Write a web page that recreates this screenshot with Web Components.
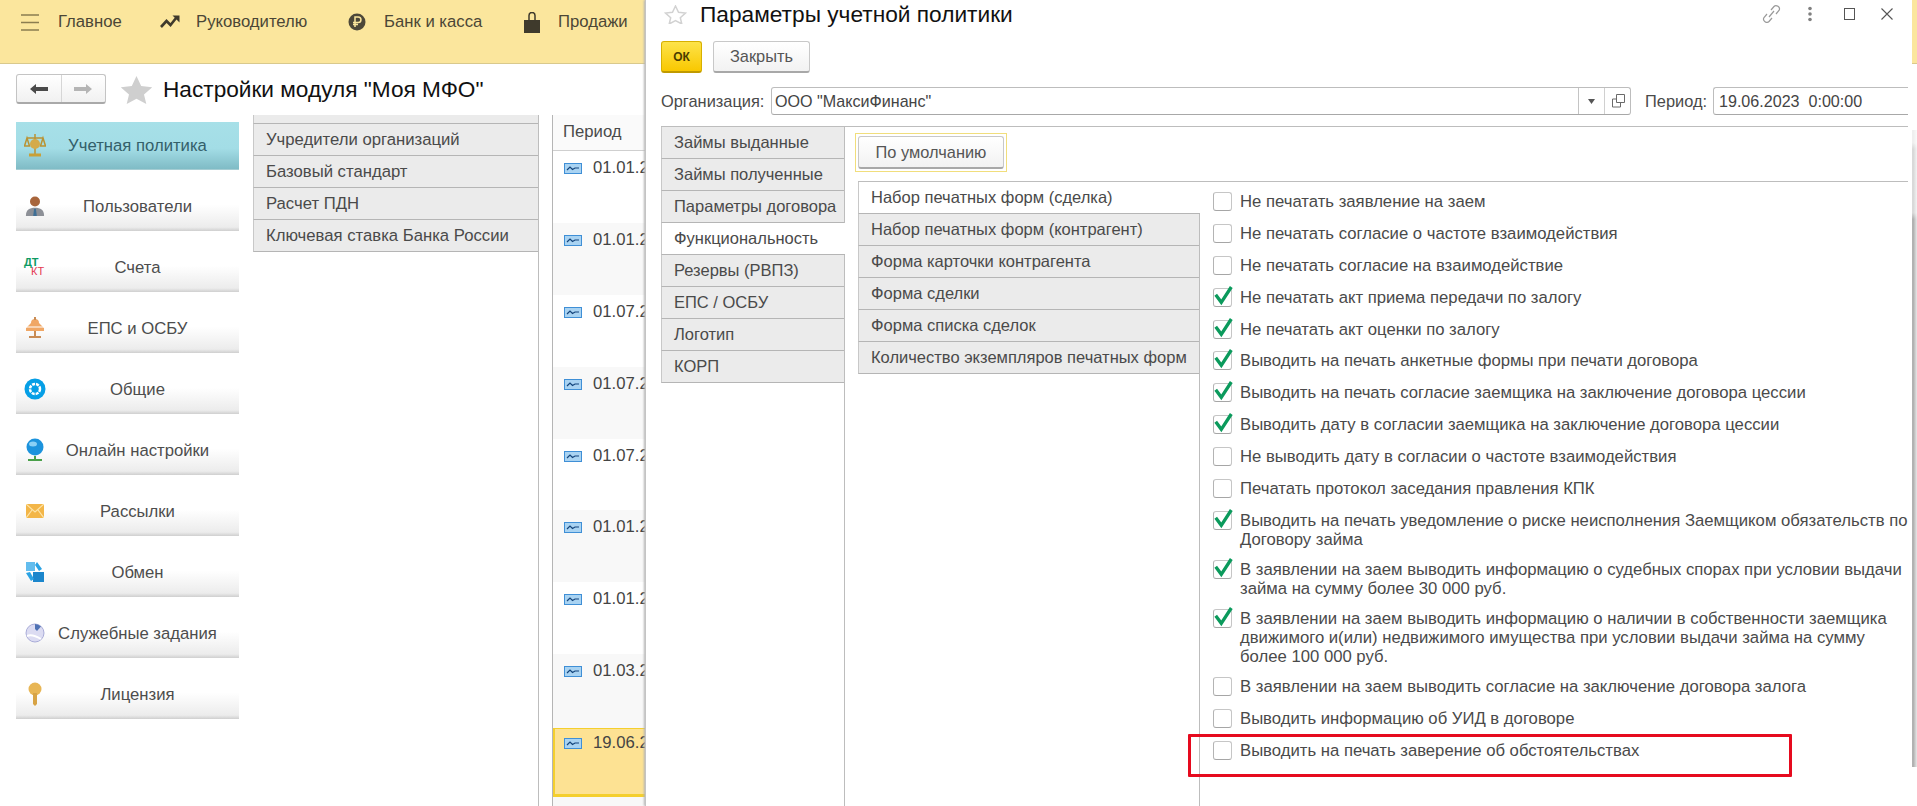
<!DOCTYPE html>
<html lang="ru"><head><meta charset="utf-8"><style>
html,body{margin:0;padding:0;width:1917px;height:806px;overflow:hidden;background:#fff;font-family:"Liberation Sans",Arial,sans-serif;color:#4a4a4a}
app-shell{display:block}
</style></head><body>
<template id="t-shell"><style>
:host{display:block;width:1917px;height:806px;overflow:hidden;position:relative;background:#fff}
.main{display:flex;flex-direction:column;width:646px;height:806px;overflow:hidden}
.work{display:flex;flex:1;min-height:0}
.dlg{position:absolute;left:646px;top:0;width:1266px;height:806px;background:#fff;box-shadow:-1px 0 0 #c4c4c4,-2px 0 2px #b5b5b5;z-index:5}
.rest{position:absolute;left:1912px;top:0;width:5px;height:63px;background:#fbe69d;border-bottom:1px solid #d9c98c}
.side{position:absolute;left:1912px;top:130px;width:5px;height:637px;background:linear-gradient(#efefef 0,#efefef 2%,#d9d9d9 3%,#d9d9d9 13%,#b2b2b2 14%,#b2b2b2 100%)}
.side2{position:absolute;left:1914px;top:130px;width:3px;height:637px;background:linear-gradient(90deg,rgba(255,255,255,.1),rgba(255,255,255,.7))}
</style><div class="main"><slot name="top"></slot><slot name="head"></slot><div class="work"><slot name="work"></slot></div></div><div class="rest"></div><div class="side"></div><div class="side2"></div><div class="dlg"><slot name="dlg"></slot></div></template>

<template id="t-topbar"><style>
:host{display:block;height:63px;background:#fbe69d;border-bottom:1px solid #d9c98c;position:relative;font-size:16.7px;color:#4b4636}
.i{position:absolute;top:12px;height:20px;display:flex;align-items:center;white-space:nowrap}
svg{display:block}
</style>
<div class="i" style="left:21px"><svg width="18" height="18" viewBox="0 0 18 18"><path d="M0 2h18M0 9.500h18M0 17h18" stroke="#8b7d50" stroke-width="1.700"/></svg><span style="margin-left:19px">Главное</span></div>
<div class="i" style="left:160px"><svg width="20" height="20" viewBox="0 0 20 20"><path d="M1 15l5.500-6 4 4 6-7.500" fill="none" stroke="#3f3a2c" stroke-width="2.600"/><path d="M12.500 3.500h7v7z" fill="#3f3a2c"/></svg><span style="margin-left:16px">Руководителю</span></div>
<div class="i" style="left:348px"><svg width="18" height="20" viewBox="0 0 18 20"><circle cx="9" cy="10" r="8.500" fill="#4d4839"/><path d="M7 15V5h3.200a2.700 2.700 0 010 5.500H5M5 12.600h5" fill="none" stroke="#fbe69d" stroke-width="1.500"/></svg><span style="margin-left:18px">Банк и касса</span></div>
<div class="i" style="left:524px"><svg width="16" height="21" viewBox="0 0 16 21"><path d="M0 8h16v13H0z" fill="#3f3a2c"/><path d="M5 10V3.500a3 3 0 016 0V10" fill="none" stroke="#3f3a2c" stroke-width="1.500"/></svg><span style="margin-left:18px">Продажи</span></div>
</template>

<template id="t-head"><style>
:host{display:flex;align-items:flex-start;height:41px;padding:10px 0 0 16px;box-sizing:content-box;flex:none}
.nav{display:flex;width:90px;height:30px;box-sizing:border-box;border:1px solid #c4c4c4;border-bottom:2px solid #a9a9a9;border-radius:3px;background:linear-gradient(#fff,#f1f1f1)}
.nav div{flex:1;display:flex;align-items:center;justify-content:center}
.nav div+div{border-left:1px solid #d6d6d6}
.star{margin:2px 0 0 15px}
h1{font:400 22.650px/30px "Liberation Sans",Arial,sans-serif;color:#111;margin:0 0 0 11px;white-space:nowrap}
</style><div class="nav"><div><svg width="18" height="10" viewBox="0 0 18 10"><path d="M0 5l6-5v3h12v4H6v3z" fill="#4a4a4a"/></svg></div><div><svg width="18" height="10" viewBox="0 0 18 10"><path d="M18 5l-6-5v3H0v4h12v3z" fill="#b5b5b5"/></svg></div></div>
<svg class="star" width="31" height="28" viewBox="0 0 31 28"><path d="M15.500 0l4.700 10 11 1.200-8.200 7.300 2.300 9.500-9.800-5.300L5.700 28 8 18.500-.2 11.200l11-1.200z" fill="#cfcfcf"/></svg>
<h1><slot></slot></h1></template>

<template id="t-menu"><style>
:host{display:flex;flex-direction:column;width:223px;margin:7px 0 0 16px;gap:13px;flex:none}
</style><slot></slot></template>

<template id="t-item"><style>
:host{display:block;height:48px;position:relative;font-size:16.7px;color:#4d4d4d;background:linear-gradient(#fff 0,#fff 45%,#ececec 92%,#cfcfcf 100%)}
:host([on]){background:linear-gradient(#a7e0e8,#a3dde6 55%,#80bcc6 97%,#b9d6da);color:#33606a}
.ic{position:absolute;left:8px;top:10px;width:22px;height:26px;display:flex;align-items:center;justify-content:center}
.t{position:absolute;left:0;right:0;top:15px;text-align:center;line-height:18px;padding-left:20px;box-sizing:border-box;white-space:nowrap}
</style><div class="ic"><slot name="ic"></slot></div><div class="t"><slot></slot></div></template>

<template id="t-list"><style>
:host{display:block;width:286px;height:691px;margin:0 0 0 14px;flex:none;box-sizing:border-box;border-right:1px solid #bdbdbd}
.clip{height:9px;box-sizing:border-box;background:#ebebeb;border:1px solid #c8c8c8;border-width:0 0 1px 1px;border-bottom-color:#b5b5b5}
</style><div class="clip"></div><slot></slot></template>

<template id="t-ltab"><style>
:host{display:block;height:32px;box-sizing:border-box;background:#ebebeb;border-bottom:1px solid #b5b5b5;border-left:1px solid #c8c8c8;padding:7px 0 0 12px;line-height:18px;font-size:16.7px;color:#4a4a4a;white-space:nowrap}
</style><slot></slot></template>

<template id="t-period"><style>
:host{display:block;width:94px;margin:0 0 0 13px;flex:none;box-sizing:border-box;border-left:1px solid #b5b5b5;height:691px;background:#f8f8f8;font-size:16.7px;overflow:hidden}
.h{height:36px;box-sizing:border-box;border-bottom:1px solid #cfcfcf;padding:8px 0 0 10px;line-height:18px;color:#4a4a4a;background:#fafafa}
</style><div class="h">Период</div><slot></slot></template>

<template id="t-prow"><style>
:host{display:flex;height:71.900px;box-sizing:border-box;padding:8px 0 0 11px;line-height:18px;color:#444;background:#f8f8f8;white-space:nowrap}
:host([w]){background:#fff}
:host([cur]){background:#fde293;border:solid #f4cf2e;border-width:1px 0 3px 2px;height:69px;margin-top:2px;padding:5px 0 0 9px}
svg{margin:4px 11px 0 0;flex:none}
</style><svg width="18" height="11" viewBox="0 0 18 11"><rect x=".5" y=".5" width="17" height="10" fill="#a9d3f2" stroke="#3f8fd6"/><path d="M3 7l3-3 2.500 2.500L11 5h4" fill="none" stroke="#14457c" stroke-width="1.200"/></svg><slot></slot></template>

<template id="t-dialog"><style>
:host{display:flex;flex-direction:column;height:806px;margin-right:4px;font-size:16.400px;color:#4a4a4a;position:relative}
.title{display:flex;align-items:center;height:29px;padding-left:18px;position:relative}
.title h2{font:400 22.700px "Liberation Sans",Arial,sans-serif;color:#111;margin:0 0 0 13px;white-space:nowrap}
.win{position:absolute;left:1115px;top:3px;display:flex;align-items:center;height:21px}
.bar{display:flex;gap:11px;margin:12px 0 0 15px;height:32px}
.org{display:flex;align-items:center;height:28px;margin:14px 0 0 15px;white-space:nowrap}
.bot{display:flex;flex:1;min-height:0;margin:11px 0 0 15px;border-top:1px solid #bdbdbd}
</style>
<div class="title"><svg width="23" height="19" viewBox="0 0 23 19"><path d="M11.500 1l3 6.300 7 .8-5.200 4.700 1.500 6.200-6.300-3.500-6.300 3.500 1.500-6.200L1.500 8.100l7-.8z" fill="none" stroke="#d2d2d2" stroke-width="1.500"/></svg><h2><slot name="title"></slot></h2>
<div class="win"><svg width="21" height="20" viewBox="0 0 21 20"><path d="M8 13l5-6M10 6l3-3.500c2-2.200 7 .5 5 4L15 10M11 14l-3 3.500c-2 2.200-7-.5-5-4L6 10" fill="none" stroke="#9a9a9a" stroke-width="1.200"/></svg>
<svg style="margin-left:26px" width="4" height="16" viewBox="0 0 4 16"><circle cx="2" cy="2.500" r="1.800" fill="#808080"/><circle cx="2" cy="8" r="1.800" fill="#808080"/><circle cx="2" cy="13.500" r="1.800" fill="#808080"/></svg>
<svg style="margin-left:32px" width="11" height="12" viewBox="0 0 11 12"><rect x=".5" y=".5" width="10" height="11" fill="none" stroke="#555"/></svg>
<svg style="margin-left:26px" width="12" height="12" viewBox="0 0 12 12"><path d="M.5.500l11 11M11.500.500l-11 11" stroke="#555" stroke-width="1.100"/></svg></div></div>
<div class="bar"><slot name="bar"></slot></div>
<div class="org"><slot name="org"></slot></div>
<div class="bot"><slot name="tabs"></slot><slot name="pane"></slot></div>
</template>

<template id="t-btn"><style>
:host{display:flex;align-items:center;justify-content:center;height:32px;box-sizing:border-box;border:1px solid #c8c8c8;border-bottom:2px solid #a8a8a8;border-radius:3px;background:linear-gradient(#fff,#f2f2f2);font-size:16.400px;color:#555}
:host([ok]){background:linear-gradient(#fde34a,#f9c800);border-color:#d7b000;border-bottom-color:#c09a00;color:#4a3d00;font-size:12px;font-weight:700}
</style><slot></slot></template>

<template id="t-field"><style>
:host{display:flex;align-items:center;height:28px;box-sizing:border-box;border:1px solid #bdbdbd;border-bottom-color:#a8a8a8;border-radius:3px;background:#fff;padding-left:3px;font-size:16.100px;color:#444;white-space:nowrap;position:relative}
.btns{display:flex;margin-left:auto;height:100%}
</style><slot></slot><div class="btns"><slot name="b"></slot></div></template>

<template id="t-vtabs"><style>
:host{display:flex;flex-direction:column;flex:none;position:relative;box-sizing:border-box}
</style><slot></slot></template>

<template id="t-vtab"><style>
:host{display:block;height:32px;box-sizing:border-box;background:#ebebeb;border-bottom:1px solid #b5b5b5;border-left:1px solid #c8c8c8;padding:6px 0 0 12px;line-height:18px;font-size:16.500px;color:#4a4a4a;white-space:nowrap;position:relative}
:host([on]){background:#fff;z-index:1;margin-right:-1px}
</style><slot></slot></template>

<template id="t-pane"><style>
:host{display:flex;flex-direction:column;flex:1;min-width:0;border-left:1px solid #bdbdbd;box-sizing:border-box;padding:6px 0 0 10px}
.dflt{align-self:flex-start;padding:2px;border:1px solid #f1de7c}
.split{display:flex;flex:1;min-height:0;margin:9px 0 0 3px;border-top:1px solid #bdbdbd}
.r{flex:1;min-width:0;border-left:1px solid #bdbdbd;padding:10px 0 0 13px;box-sizing:border-box;display:flex;flex-direction:column;position:relative}
</style><div class="dflt"><slot name="dflt"></slot></div><div class="split"><slot name="inner"></slot><div class="r"><slot name="checks"></slot></div></div></template>

<template id="t-check"><style>
:host{display:grid;grid-template-columns:19px 1fr;column-gap:8px;box-sizing:border-box;min-height:31.900px;padding-bottom:11px;line-height:19px;font-size:16.7px;color:#4a4a4a;white-space:nowrap}
.b{width:19px;height:19px;box-sizing:border-box;border:1px solid #c6c6c6;border-bottom-color:#a6a6a6;border-left-color:#b4b4b4;border-radius:3px;background:#fff;position:relative}
svg{position:absolute;left:-1px;top:-4px;display:none}
:host([on]) svg{display:block}
</style><div class="b"><svg width="21" height="21" viewBox="0 0 21 21"><path d="M2.700 9.700l5.600 7.600L18.300 2" fill="none" stroke="#0b9a5c" stroke-width="3.300"/></svg></div><div><slot></slot></div></template>

<template id="t-mark"><style>
:host{position:absolute;left:-12px;top:552px;width:604px;height:43px;box-sizing:border-box;border:3.500px solid #e60a1e;pointer-events:none;border-radius:1px}
</style></template>

<app-shell>
<top-bar slot="top"></top-bar>
<page-head slot="head">Настройки модуля "Моя МФО"</page-head>
<side-menu slot="work">
<menu-item on><svg slot="ic" width="22" height="24" viewBox="0 0 22 24"><path d="M11 1v20M3 5h16M3 5l-2.500 8h5zM19 5l-2.500 8h5z" fill="none" stroke="#b99334" stroke-width="1.500"/><path d="M5 22h12" stroke="#c9a037" stroke-width="3"/><circle cx="11" cy="11" r="5" fill="#d4aa4a"/></svg>Учетная политика</menu-item>
<menu-item><svg slot="ic" width="20" height="22" viewBox="0 0 22 24"><circle cx="11" cy="7" r="5.500" fill="#a8653b"/><path d="M1 23c0-7 4-9 10-9s10 2 10 9z" fill="#8d9097"/><path d="M10 15h2l1 8h-4z" fill="#3f6f96"/></svg>Пользователи</menu-item>
<menu-item><span slot="ic" style="display:block;width:22px;font:700 11px/9px 'Liberation Sans',sans-serif;color:#0d9a63">ДТ<br><span style="color:#e43b52;margin-left:7px;font-weight:400">КТ</span></span>Счета</menu-item>
<menu-item><svg slot="ic" width="20" height="24" viewBox="0 0 20 24"><path d="M6 7a4 4 0 018 0l5 5v3H1v-3z" fill="#f0a765"/><path d="M10 1v3M10 15v6M4 21h12" stroke="#c98c55" stroke-width="2"/><path d="M1 11h18" stroke="#fff" stroke-width="1"/></svg>ЕПС и ОСБУ</menu-item>
<menu-item><svg slot="ic" width="22" height="22" viewBox="0 0 22 22"><circle cx="11" cy="11" r="10.500" fill="#069fe6"/><circle cx="11" cy="11" r="5" fill="none" stroke="#fff" stroke-width="2.500" stroke-dasharray="3 1"/><circle cx="11" cy="11" r="2" fill="#069fe6"/></svg>Общие</menu-item>
<menu-item><svg slot="ic" width="20" height="24" viewBox="0 0 20 24"><circle cx="10" cy="9" r="8.500" fill="#1c93dd"/><ellipse cx="8" cy="6" rx="4" ry="2.500" fill="#8ad0f5"/><path d="M10 18v3M3 22h14" stroke="#4aa04a" stroke-width="2"/></svg>Онлайн настройки</menu-item>
<menu-item><svg slot="ic" width="18" height="14" viewBox="0 0 18 14"><rect width="18" height="14" fill="#f3b648"/><path d="M0 0l9 8 9-8M0 14l6-8M18 14l-6-8" fill="none" stroke="#fde4a8" stroke-width="1.200"/></svg>Рассылки</menu-item>
<menu-item><svg slot="ic" width="20" height="22" viewBox="0 0 20 22"><path d="M1 1h9v9H1z" fill="#63bdee"/><path d="M8 11h11v10H8z" fill="#1b86cc"/><path d="M1 12l5 8 3-2-4-7z" fill="#2ba3e4"/><path d="M12 1l5 7-3 2-4-6z" fill="#2ba3e4"/></svg>Обмен</menu-item>
<menu-item><svg slot="ic" width="20" height="22" viewBox="0 0 20 22"><circle cx="10" cy="11" r="9" fill="#dcdcf2" stroke="#a9acd8"/><path d="M10 2a9 9 0 016 2.500L12 9 10 7z" fill="#4f72b4"/><path d="M2 14c4-2 9 0 14 3" stroke="#fff" stroke-width="2" fill="none"/></svg>Служебные задания</menu-item>
<menu-item><svg slot="ic" width="14" height="24" viewBox="0 0 14 24"><circle cx="7" cy="7" r="6.500" fill="#e8b655"/><path d="M5 11h4v11l-2 2-2-2z" fill="#d7a345"/></svg>Лицензия</menu-item>
</side-menu>
<link-list slot="work">
<link-tab>Учредители организаций</link-tab>
<link-tab>Базовый стандарт</link-tab>
<link-tab>Расчет ПДН</link-tab>
<link-tab>Ключевая ставка Банка России</link-tab>
</link-list>
<period-list slot="work">
<period-row w>01.01.2</period-row><period-row>01.01.2</period-row><period-row w>01.07.2</period-row><period-row>01.07.2</period-row><period-row w>01.07.2</period-row><period-row>01.01.2</period-row><period-row w>01.01.2</period-row><period-row>01.03.2</period-row><period-row cur>19.06.2</period-row>
</period-list>
<policy-dialog slot="dlg">
<span slot="title">Параметры учетной политики</span>
<ui-btn slot="bar" ok style="width:41px">ОК</ui-btn>
<ui-btn slot="bar" style="width:97px">Закрыть</ui-btn>
<span slot="org" style="display:block;width:110px">Организация:</span>
<ui-field slot="org" style="width:860px">ООО "МаксиФинанс"
  <span slot="b" style="width:25px;border-left:1px solid #c4c4c4;display:flex;align-items:center;justify-content:center"><svg width="7" height="5" viewBox="0 0 7 5"><path d="M0 0h7L3.500 5z" fill="#555"/></svg></span>
  <span slot="b" style="width:25px;border-left:1px solid #d0d0d0;display:flex;align-items:center;justify-content:center"><svg width="14" height="14" viewBox="0 0 14 14"><path d="M5.500.500h8v8h-8zM5.500 5h-4v8h8V9" fill="none" stroke="#6a6a6a"/></svg></span>
</ui-field>
<span slot="org" style="display:block;width:68px;margin-left:14px">Период:</span>
<ui-field slot="org" style="width:195px;padding-left:5px;border-right:0;border-radius:3px 0 0 3px">19.06.2023&nbsp;&nbsp;0:00:00</ui-field>
<v-tabs slot="tabs" style="width:183px">
<v-tab>Займы выданные</v-tab><v-tab>Займы полученные</v-tab><v-tab>Параметры договора</v-tab><v-tab on>Функциональность</v-tab><v-tab>Резервы (РВПЗ)</v-tab><v-tab>ЕПС / ОСБУ</v-tab><v-tab>Логотип</v-tab><v-tab>КОРП</v-tab>
</v-tabs>
<tab-pane slot="pane">
<ui-btn slot="dflt" style="width:146px;height:33px">По умолчанию</ui-btn>
<v-tabs slot="inner" style="width:341px">
<v-tab on>Набор печатных форм (сделка)</v-tab><v-tab>Набор печатных форм (контрагент)</v-tab><v-tab>Форма карточки контрагента</v-tab><v-tab>Форма сделки</v-tab><v-tab>Форма списка сделок</v-tab><v-tab>Количество экземпляров печатных форм</v-tab>
</v-tabs>
<check-row slot="checks">Не печатать заявление на заем</check-row>
<check-row slot="checks">Не печатать согласие о частоте взаимодействия</check-row>
<check-row slot="checks">Не печатать согласие на взаимодействие</check-row>
<check-row slot="checks" on>Не печатать акт приема передачи по залогу</check-row>
<check-row slot="checks" on>Не печатать акт оценки по залогу</check-row>
<check-row slot="checks" on>Выводить на печать анкетные формы при печати договора</check-row>
<check-row slot="checks" on>Выводить на печать согласие заемщика на заключение договора цессии</check-row>
<check-row slot="checks" on>Выводить дату в согласии заемщика на заключение договора цессии</check-row>
<check-row slot="checks">Не выводить дату в согласии о частоте взаимодействия</check-row>
<check-row slot="checks">Печатать протокол заседания правления КПК</check-row>
<check-row slot="checks" on>Выводить на печать уведомление о риске неисполнения Заемщиком обязательств по<br>Договору займа</check-row>
<check-row slot="checks" on>В заявлении на заем выводить информацию о судебных спорах при условии выдачи<br>займа на сумму более 30 000 руб.</check-row>
<check-row slot="checks" on>В заявлении на заем выводить информацию о наличии в собственности заемщика<br>движимого и(или) недвижимого имущества при условии выдачи займа на сумму<br>более 100 000 руб.</check-row>
<check-row slot="checks">В заявлении на заем выводить согласие на заключение договора залога</check-row>
<check-row slot="checks">Выводить информацию об УИД в договоре</check-row>
<check-row slot="checks">Выводить на печать заверение об обстоятельствах</check-row>
<red-mark slot="checks"></red-mark>
</tab-pane>
</policy-dialog>
</app-shell>
<script>
const reg=(tag,tid)=>customElements.define(tag,class extends HTMLElement{constructor(){super();this.attachShadow({mode:"open"}).append(document.getElementById(tid).content.cloneNode(true))}});
[["app-shell","t-shell"],["top-bar","t-topbar"],["page-head","t-head"],["side-menu","t-menu"],["menu-item","t-item"],["link-list","t-list"],["link-tab","t-ltab"],["period-list","t-period"],["period-row","t-prow"],["policy-dialog","t-dialog"],["ui-btn","t-btn"],["ui-field","t-field"],["v-tabs","t-vtabs"],["v-tab","t-vtab"],["tab-pane","t-pane"],["check-row","t-check"],["red-mark","t-mark"]].forEach(([a,b])=>reg(a,b));
</script>
</body></html>
